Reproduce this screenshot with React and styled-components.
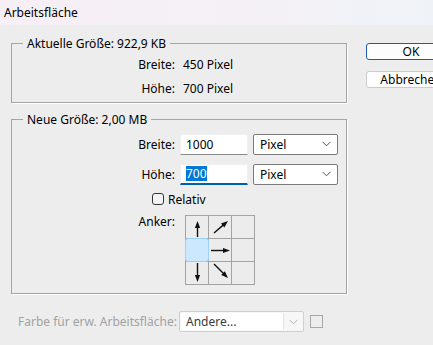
import React from "react";
import styled, { createGlobalStyle } from "styled-components";

const Global = createGlobalStyle`
  html, body { margin: 0; padding: 0; background: #ededed; }
  body { font-family: "Noto Sans", "Segoe UI", sans-serif; font-size: 12px; color: #000; }
`;

const Window = styled.div`
  width: 433px;
  height: 345px;
  overflow: hidden;
  background: #ededed;
  display: flex;
  flex-direction: column;
`;

const TitleBar = styled.div`
  height: 25px;
  flex-shrink: 0;
  display: flex;
  align-items: center;
  padding-left: 4px;
  background: linear-gradient(90deg, #f6eff5 0%, #f4f1f6 60%, #eff3f8 100%);
  font-size: 12px;
  color: #000;
`;

const Main = styled.div`
  display: flex;
  padding: 18px 0 0 11px;
`;

const LeftColumn = styled.div`
  width: 336px;
  flex-shrink: 0;
  display: flex;
  flex-direction: column;
`;

const ButtonColumn = styled.div`
  width: 90px;
  flex-shrink: 0;
  margin-left: 19px;
  display: flex;
  flex-direction: column;
  gap: 11px;
`;

const DialogButton = styled.button`
  width: 90px;
  height: 17px;
  padding: 0;
  font-family: inherit;
  font-size: 12px;
  line-height: 15px;
  color: #000;
  background: #fdfdfd;
  border: 1px solid ${(p) => (p.$default ? "#1f5d9c" : "#cccccc")};
  border-radius: 3px;
  white-space: nowrap;
  overflow: hidden;
`;

const Group = styled.div`
  position: relative;
  border: 1px solid #a5a5a5;
  box-shadow: 1px 1px 0 #ffffff;
  margin-top: ${(p) => p.$gap || 0}px;
  padding: ${(p) => p.$pad};
`;

const Legend = styled.div`
  position: absolute;
  top: -8px;
  left: 11px;
  padding: 0 4px;
  background: #ededed;
  line-height: 15px;
  white-space: nowrap;
`;

const InfoRow = styled.div`
  display: flex;
  align-items: center;
  height: 24px;
`;

const Label = styled.div`
  width: 163px;
  flex-shrink: 0;
  text-align: right;
  white-space: nowrap;
  align-self: ${(p) => (p.$top ? "flex-start" : "auto")};
  line-height: ${(p) => (p.$top ? "13px" : "normal")};
`;

const InfoValue = styled.div`
  margin-left: 8px;
  white-space: nowrap;
`;

const FormRow = styled.div`
  display: flex;
  align-items: ${(p) => (p.$top ? "flex-start" : "center")};
  height: ${(p) => p.$h}px;
  margin-top: ${(p) => p.$mt || 0}px;
`;

const TextField = styled.div`
  width: 68px;
  height: 21px;
  margin-left: 5px;
  box-sizing: border-box;
  background: #ffffff;
  border: 1px solid #f0f0f0;
  border-bottom: ${(p) => (p.$focused ? "2px solid #005fb8" : "1px solid #8a8a8a")};
  padding-left: 5px;
  display: flex;
  align-items: center;
`;

const Selected = styled.span`
  background: #0078d7;
  color: #fff;
  line-height: 15px;
`;

const Select = styled.div`
  width: 85px;
  height: 21px;
  margin-left: 5px;
  box-sizing: border-box;
  background: #ffffff;
  border: 1px solid #7a7a7a;
  border-radius: 2px;
  padding: 0 6px 0 6px;
  display: flex;
  align-items: center;
  justify-content: space-between;
`;

const CheckRow = styled.div`
  display: flex;
  align-items: center;
  gap: 4px;
  margin-left: 140px;
`;

const CheckBox = styled.div`
  width: 12px;
  height: 12px;
  box-sizing: border-box;
  border: 1px solid #333;
  border-radius: 3px;
  background: #f4f4f4;
`;

const AnchorGrid = styled.div`
  margin-left: 10px;
  display: grid;
  grid-template-columns: repeat(3, 22px);
  grid-template-rows: repeat(3, 22px);
  gap: 1px;
  background: #a3a3a3;
  border: 1px solid #a3a3a3;
`;

const AnchorCell = styled.div`
  background: ${(p) => (p.$active ? "#cce8ff" : "#ececec")};
  ${(p) =>
    p.$active &&
    `margin: -1px; border: 1px solid #99d1ff; border-radius: 3px; z-index: 1;`}
  display: flex;
`;

const BottomRow = styled.div`
  display: flex;
  align-items: center;
  margin-top: 17px;
  margin-left: 7px;
`;

const DisabledLabel = styled.div`
  width: 161px;
  flex-shrink: 0;
  color: #a2a2a2;
  white-space: nowrap;
`;

const DisabledSelect = styled.div`
  width: 125px;
  height: 21px;
  box-sizing: border-box;
  border: 1px solid #cfcfcf;
  border-radius: 2px;
  background: #f7f7f7;
  padding: 1px;
  display: flex;
`;

const DisabledField = styled.div`
  flex: 1;
  background: #ffffff;
  border-right: 1px solid #e2e2e2;
  padding-left: 5px;
  display: flex;
  align-items: center;
  color: #3a3a3a;
`;

const ChevronBox = styled.div`
  width: 18px;
  display: flex;
  align-items: center;
  justify-content: center;
`;

const Swatch = styled.div`
  width: 13px;
  height: 13px;
  box-sizing: border-box;
  margin-left: 6px;
  border: 1px solid #a8a8a8;
`;

const Chevron = ({ color = "#555" }) => (
  <svg width="9" height="6" viewBox="0 0 9 6">
    <path d="M0.5 0.8 L4.5 4.8 L8.5 0.8" fill="none" stroke={color} strokeWidth="1" />
  </svg>
);

const Arrow = ({ x1, y1, x2, y2 }) => {
  const dx = x2 - x1;
  const dy = y2 - y1;
  const len = Math.hypot(dx, dy);
  const ux = dx / len;
  const uy = dy / len;
  const hl = 7;
  const hw = 2.6;
  const bx = x2 - ux * hl;
  const by = y2 - uy * hl;
  const px = -uy * hw;
  const py = ux * hw;
  return (
    <svg width="22" height="22" viewBox="0 0 22 22">
      <line x1={x1} y1={y1} x2={bx + ux} y2={by + uy} stroke="#111" strokeWidth="1.4" />
      <polygon
        points={`${x2},${y2} ${bx + px},${by + py} ${bx - px},${by - py}`}
        fill="#111"
      />
    </svg>
  );
};

const cells = [
  { x1: 11.5, y1: 21, x2: 11.5, y2: 5 },
  { x1: 5, y1: 17, x2: 19, y2: 5 },
  null,
  "active",
  { x1: 2, y1: 11.5, x2: 21, y2: 11.5 },
  null,
  { x1: 11.5, y1: 1, x2: 11.5, y2: 20 },
  { x1: 5, y1: 2, x2: 19, y2: 16 },
  null,
];

export default function App() {
  return (
    <Window>
      <Global />
      <TitleBar>Arbeitsfläche</TitleBar>
      <Main>
        <LeftColumn>
          <Group $pad="8px 0 2px">
            <Legend>Aktuelle Größe: 922,9 KB</Legend>
            <InfoRow>
              <Label>Breite:</Label>
              <InfoValue>450 Pixel</InfoValue>
            </InfoRow>
            <InfoRow>
              <Label>Höhe:</Label>
              <InfoValue>700 Pixel</InfoValue>
            </InfoRow>
          </Group>

          <Group $gap={16} $pad="13px 0 8px">
            <Legend>Neue Größe: 2,00 MB</Legend>
            <FormRow $h={22}>
              <Label>Breite:</Label>
              <TextField>1000</TextField>
              <Select>
                Pixel
                <Chevron />
              </Select>
            </FormRow>
            <FormRow $h={22} $mt={8}>
              <Label>Höhe:</Label>
              <TextField $focused>
                <Selected>700</Selected>
              </TextField>
              <Select>
                Pixel
                <Chevron />
              </Select>
            </FormRow>
            <FormRow $h={16} $mt={6}>
              <CheckRow>
                <CheckBox />
                Relativ
              </CheckRow>
            </FormRow>
            <FormRow $h={70} $mt={8} $top>
              <Label $top>Anker:</Label>
              <AnchorGrid>
                {cells.map((c, i) => (
                  <AnchorCell key={i} $active={c === "active"}>
                    {c && c !== "active" ? <Arrow {...c} /> : null}
                  </AnchorCell>
                ))}
              </AnchorGrid>
            </FormRow>
          </Group>

          <BottomRow>
            <DisabledLabel>Farbe für erw. Arbeitsfläche:</DisabledLabel>
            <DisabledSelect>
              <DisabledField>Andere...</DisabledField>
              <ChevronBox>
                <Chevron color="#b5b5b5" />
              </ChevronBox>
            </DisabledSelect>
            <Swatch />
          </BottomRow>
        </LeftColumn>
        <ButtonColumn>
          <DialogButton $default>OK</DialogButton>
          <DialogButton>Abbrechen</DialogButton>
        </ButtonColumn>
      </Main>
    </Window>
  );
}
